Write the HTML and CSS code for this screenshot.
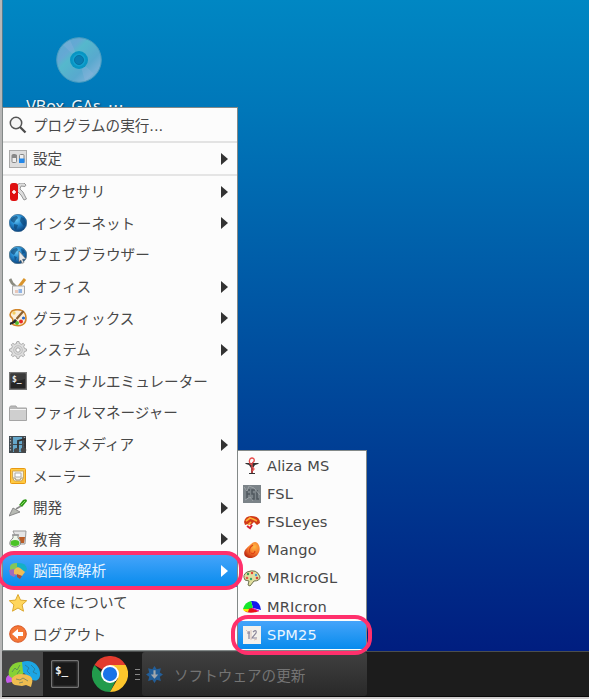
FILE: index.html
```html
<!DOCTYPE html>
<html lang="ja">
<head>
<meta charset="utf-8">
<title>Xfce</title>
<link rel="stylesheet" href="styles.css">
</head>
<body>
<div class="screen">
  <main class="desktop">
    <div class="disc-item">
      <svg class="disc" viewBox="0 0 46 46"><defs><linearGradient id="cd" x2="1" y2="1"><stop stop-color="#56adcf"/><stop offset=".28" stop-color="#65a8d4"/><stop offset=".38" stop-color="#55b8cc"/><stop offset=".65" stop-color="#58a9ce"/><stop offset=".8" stop-color="#74b0d6"/><stop offset="1" stop-color="#55aacd"/></linearGradient></defs><circle cx="23" cy="23" r="22.3" fill="url(#cd)" stroke="#4a9dc0"/><path d="M23 23 7 8l7-5zM23 23l6 21 9-7z" fill="#92b6dd" opacity=".3"/><circle cx="23" cy="23" r="9" fill="#0795c3"/><circle cx="23" cy="23" r="6.5" fill="#12a0cf"/><circle cx="23" cy="23" r="4.5" fill="#087db3" stroke="#0871a0"/></svg>
      <span class="disc-name">VBox_GAs_⋯</span>
    </div>
  </main>
  <footer class="taskbar">
    <div class="start"><svg viewBox="0 0 36 28"><path d="M4 15C1 16 0 20 2 23l5-1 3-5z" fill="#c45be9"/><path d="M4 16C2 7 9 1 18 2l2 10-6 5-7 1z" fill="#86d235"/><path d="M17 2c10-4 19 4 18 13-1 8-8 6-12 2l-5-5z" fill="#1ca6e5"/><path d="M7 18c4-5 12-5 18-2 4 3 2 7 1 11l-5-2-4 1-7-1c-3-1-4-4-3-7z" fill="#eebd50"/><path d="m7 12 3-4 2 2 3-5m-3 9 3-4m5-5 4 3-2 3 3 3m1-9 4 4-2 3 4 2M11 19l4 1 3-2 5 3m-9 2 4-1" fill="none" stroke="#37636a" stroke-opacity=".55"/></svg></div>
    <div class="launcher"><svg viewBox="0 0 28 28"><rect x=".7" y=".7" width="26.6" height="26.6" rx="1" fill="#171717" stroke="#747474" stroke-width="1.4"/><rect x="2" y="2" width="24" height="24" fill="#191919" stroke="#333"/><text x="4" y="14" class="term-large">$_</text></svg></div>
    <div class="launcher chrome"><svg viewBox="0 0 48 48"><path d="M24 24 3.2 12A24 24 0 0 1 44.800 12z" fill="#e33b2e"/><path d="M24 24h-10L3.200 12A24 24 0 0 0 24 48l9-18z" fill="#229b4c"/><path d="M24 12h20.800A24 24 0 0 1 24 48l10.400-18z" fill="#fcc52c"/><circle cx="24" cy="24" r="12" fill="#fff"/><circle cx="24" cy="24" r="9.500" fill="#1a73e8"/></svg></div>
    <div class="grip"><i></i><i></i><i></i></div>
    <div class="task"><svg viewBox="0 0 16 16"><path d="m8 0 2 3 4-1-1 4 3 2-3 2 1 4-4-1-2 3-2-3-4 1 1-4-3-2 3-2-1-4 4 1z" fill="#235e98"/><path d="M7 4h2v4h2.500l-3.500 4-3.500-4H7z" fill="#a2a8ad"/></svg><span>ソフトウェアの更新</span></div>
  </footer>

  <nav class="menu">
    <div class="item run"><svg viewBox="0 0 18 18"><circle cx="7" cy="7" r="5.700" fill="#f4f4f4" stroke="#555" stroke-width="1.500"/><path d="m11 11 5.500 5.500" stroke="#4b4b4b" stroke-width="2.300"/></svg><span>プログラムの実行...</span></div>
    <div class="item settings"><svg viewBox="0 0 18 18"><rect x=".5" y=".5" width="17" height="17" fill="#ddd" stroke="#aaa"/><rect x="3" y="4.500" width="4.500" height="8" rx="1" fill="#eee" stroke="#888"/><path d="M3 5h5v3H3z" fill="#888"/><rect x="10.500" y="4.500" width="4.500" height="8" rx="1" fill="#eee" stroke="#888"/><path d="M10 8.500h5.500v4.500H10z" fill="#2588e9"/></svg><span>設定</span><b></b></div>
    <div class="item"><svg viewBox="0 0 18 18"><path d="m8 2 3-2h4l2 2-1 1.500-4-.5-1 3 3 3 3.500 7-2.500 1-3-5-4-4z" fill="#ddd" stroke="#8d8d8d" stroke-width=".9"/><rect x="1" y="0" width="8" height="18" rx="3" fill="#df1010"/><path d="M5 7v4M3 9h4" stroke="#fff" stroke-width="1.500"/></svg><span>アクセサリ</span><b></b></div>
    <div class="item"><svg viewBox="0 0 18 18"><defs><radialGradient id="globe" cx=".4" cy=".3" r=".7"><stop stop-color="#6accf9"/><stop offset=".5" stop-color="#2386cc"/><stop offset="1" stop-color="#0b4480"/></radialGradient></defs><circle cx="9" cy="9" r="8.700" fill="url(#globe)" stroke="#2a5e86" stroke-width=".6"/><path d="M2 5q2-3 6-3L9 4 7 6 5 9 2 7zm3 5 4 1-2 5-2-2zm7-7 3 1 2 5-2 3-2-2-2-3z" fill="#0d4474" opacity=".65"/></svg><span>インターネット</span><b></b></div>
    <div class="item"><svg viewBox="0 0 18 18"><circle cx="9" cy="9" r="8.700" fill="url(#globe)" stroke="#4d7185" stroke-width=".8"/><path d="M2 5q2-3 6-3L9 4 7 6 5 9 2 7zm3 5 3 1-2 4zm7-7 3 1 1 3-3 1z" fill="#0d4474" opacity=".65"/><path d="m10 5 7 8-3.500.3 1.500 3.200-1.800.8-1.500-3.300L10 16z" fill="#e8e8e8" stroke="#666" stroke-width=".6"/></svg><span>ウェブブラウザー</span></div>
    <div class="item"><svg viewBox="0 0 18 18"><path d="m1 1 2 4 5 5" fill="none" stroke="#8b8b80" stroke-width="2.800"/><path d="m16 1-7 9" stroke="#d9942b" stroke-width="3"/><path d="M3.500 8h12v7q0 2-2 2h-8q-2 0-2-2z" fill="#f3f3f3" stroke="#aaa"/><path d="M6 12h3v3H6z" fill="#e8c7b9"/><path d="M9.500 11h3.500v4H9.500z" fill="#91b5e5"/></svg><span>オフィス</span><b></b></div>
    <div class="item"><svg viewBox="0 0 18 18"><path d="M3 2C9-1 17 1 17 9c0 7-6 9-12 7-4-1 1-4-2-7-3-2-2-5 0-7z" fill="#fbefdc" stroke="#d18529" stroke-width="1.600"/><circle cx="8" cy="14" r="2" fill="#54bd28"/><circle cx="12" cy="12.500" r="2" fill="#e92a24"/><circle cx="14.500" cy="9" r="1.600" fill="#2669cd"/><circle cx="5" cy="4" r="1.700" fill="#f3ce65"/><path d="m14.500 2-7 8" stroke="#8c6133" stroke-width="2.200"/><path d="m6 10 2 1.500-2 2.500-5 2q-1-3 2-3z" fill="#292929"/></svg><span>グラフィックス</span><b></b></div>
    <div class="item"><svg viewBox="0 0 18 18"><path d="m7.500 1 .5-.5h2l.5 2 2 .8 1.700-1 1.500 1.500-1 1.700.8 2 2 .5v2l-2 .5-.8 2 1 1.700-1.500 1.500-1.700-1-2 .8-.5 2H8l-.5-2-2-.8-1.700 1-1.500-1.500 1-1.700-.8-2-2-.5V8l2-.5.8-2-1-1.700 1.500-1.500 1.700 1 2-.8z" fill="#ddd" stroke="#a6a6a6" stroke-width=".9"/><circle cx="9" cy="9" r="4.300" fill="none" stroke="#c0c0c0"/><circle cx="9" cy="9" r="2.200" fill="#fff" stroke="#a6a6a6"/></svg><span>システム</span><b></b></div>
    <div class="item"><svg viewBox="0 0 18 18"><rect x=".7" y=".7" width="16.600" height="16.600" fill="#252525" stroke="#777" stroke-width="1.400"/><path d="M2 2h14v5L2 11z" fill="#3b3b3b"/><text x="3" y="10" class="term-small">$_</text></svg><span>ターミナルエミュレーター</span></div>
    <div class="item"><svg viewBox="0 0 18 18"><path d="M.5 16.500v-13l1-1.500H7l1 2h9.500v12.500z" fill="#b8b8b8" stroke="#a5a5a5"/><path d="M1 6h16v10H1z" fill="#cfcfcf"/><path d="M1 5.500h16" stroke="#f5f5f5"/></svg><span>ファイルマネージャー</span></div>
    <div class="item"><svg viewBox="0 0 18 18"><path d="M0 0h17v17H0z" fill="#414b52"/><path d="M4 1h9v7H4zm0 8h9v7H4z" fill="#65a7ca"/><path d="M1.500 1v15m14-15v15" stroke="#aaa" stroke-width="1.200" stroke-dasharray="1.500"/><path d="M9 14V5l7-2v11" fill="none" stroke="#303030" stroke-width="1.800"/><ellipse cx="7.500" cy="14.500" rx="2.700" ry="2.500" fill="#484848"/><ellipse cx="14.500" cy="14" rx="2.800" ry="2.500" fill="#484848"/></svg><span>マルチメディア</span><b></b></div>
    <div class="item"><svg viewBox="0 0 18 18"><rect x="1.500" y="1.500" width="15" height="15" rx="1" fill="#ffc941" stroke="#e89912"/><path d="M3.500 4h11v7l-2 3h-7l-2-3z" fill="#f4f1e7" stroke="#c89b46" stroke-width=".8"/><path d="M6 6h6v4H6z" fill="#fff" stroke="#aaa"/><path d="M4 11h2l1 2h4l1-2h2" fill="none" stroke="#a79776"/></svg><span>メーラー</span></div>
    <div class="item"><svg viewBox="0 0 18 18"><path d="m10 6 4-5q4-2 4 1l-5 6z" fill="#319819"/><path d="m12 6 4-4" stroke="#84df60"/><path d="m7 10 5-3" stroke="#888" stroke-width="1.500"/><path d="m0 17 4-8 7 4z" fill="#b7bab4" stroke="#777" stroke-width=".8"/></svg><span>開発</span><b></b></div>
    <div class="item"><svg viewBox="0 0 18 18"><path d="M4 1h13l-1 13h-6z" fill="#e5e5e5" stroke="#999"/><path d="M10 7h6l-1 6h-4z" fill="#bb5e28"/><path d="M4 5h5v3c5 5 2 9-3 9-6 0-7-5-2-9z" fill="#edf6e9" stroke="#888"/><ellipse cx="6" cy="13" rx="4.500" ry="3" fill="#4bc327"/><path d="M3 5h7" stroke="#999" stroke-width="1.500"/></svg><span>教育</span><b></b></div>
    <div class="item selected"><svg viewBox="0 0 18 18"><path d="M1 5q0-4 7-4l2 7-6 2-3-2z" fill="#83c65a"/><path d="M8 1q9-1 10 6 0 3-4 2L8 5z" fill="#14b0c6"/><path d="M0 8l5-1 4 4-4 4-4-2z" fill="#a46cb9"/><path d="M5 8q3-4 6-2l5 4-3 4-8-2z" fill="#f0bd55"/><path d="m8 12 5 2-2 3-3-2z" fill="#a74a40"/></svg><span>脳画像解析</span><b></b></div>
    <div class="item"><svg viewBox="0 0 18 18"><path d="m9 .5 2.500 5.600 6.200.6-4.600 4.200 1.400 6.300L9 14l-5.500 3.200 1.400-6.300L.3 6.700l6.200-.6z" fill="#ffd65d" stroke="#dba72e"/></svg><span>Xfce について</span></div>
    <div class="item"><svg viewBox="0 0 18 18"><circle cx="9" cy="9" r="8.300" fill="#f47636" stroke="#d85623"/><path d="m3 9 6-5v3h5v4H9v3z" fill="#fff"/></svg><span>ログアウト</span></div>
  </nav>

  <nav class="submenu">
    <div class="item"><svg viewBox="0 0 18 18"><path d="M2 6h14l-1 1-3 1-2 3v5h2v1H6v-1h2v-5L6 8 3 7z" fill="#333"/><path d="M9 16V6m0 8q4-2 0-4m0-2q-4-2-2-6 2-2 4 0 1 3-2 4" fill="none" stroke="#e74c4c" stroke-width="1.300"/></svg><span>Aliza MS</span></div>
    <div class="item"><svg viewBox="0 0 18 18"><path d="M0 0h18v18H0z" fill="#7b8388"/><path d="M4 14V5h3M4 9h3m5-4H9v4h2v5H8m6-9v9h2" fill="none" stroke="#50585e" stroke-width="1.500"/><path d="m1 2 3 4 2-5 5 2 6 7M2 15l5-3 3 4" fill="none" stroke="#9ba1a5"/></svg><span>FSL</span></div>
    <div class="item"><svg viewBox="0 0 18 18"><path d="M1 9Q2 3 8 3q9 0 9 7l-3 2-3-3-3 3-3-1-3 1z" fill="#d13a18"/><path d="m3 8 4-3 3 1 4 2m-9 4 3-3" fill="none" stroke="#ffae35" stroke-width="1.600"/><path d="m4 13 3 2 2-3" fill="none" stroke="#d82236" stroke-width="2"/></svg><span>FSLeyes</span></div>
    <div class="item"><svg viewBox="0 0 18 18"><defs><radialGradient id="mango" cx=".65" cy=".3" r=".75"><stop stop-color="#ffb942"/><stop offset=".55" stop-color="#f5742b"/><stop offset="1" stop-color="#be2912"/></radialGradient></defs><path d="M12 1c5 1 6 8 3 12-3 5-10 5-13 2C-1 10 5 6 8 3q2-2 4-2z" fill="url(#mango)"/><path d="M10 4q-5 3-3 8m1 0q3 2 4-2" fill="none" stroke="#dc4318" stroke-width="1.200"/></svg><span>Mango</span></div>
    <div class="item"><svg viewBox="0 0 18 18"><path d="M4 3q10-4 13 5 0 4-6 4l-4 5-2-1 1-4-4-1Q-1 6 4 3z" fill="#e2df9f" stroke="#6d704d"/><circle cx="5" cy="5" r="1.200" fill="#3a9a51"/><circle cx="9" cy="4" r="1.200" fill="#e64435"/><circle cx="13" cy="6" r="1.200" fill="#479ed8"/><circle cx="14" cy="9" r="1.300" fill="#d44737"/><circle cx="4" cy="9" r="1.300" fill="#e25b4a"/><circle cx="8" cy="10" r="1.200" fill="#37a36b"/></svg><span>MRIcroGL</span></div>
    <div class="item"><svg viewBox="0 0 18 18"><path d="M8 3q9-1 10 9l-8-2z" fill="#1419ed"/><path d="M8 3Q2 4 0 11l6 1 4-2z" fill="#16e72b"/><path d="m1 12 8-2 7 3q-7 3-13 1z" fill="#e9111b"/><path d="m0 11 6 0-1 3-4-1z" fill="#f5e700"/><path d="m9 10 7 3" stroke="#e411cc"/></svg><span>MRIcron</span></div>
    <div class="item selected"><svg viewBox="0 0 18 18"><path d="M0 0h18v18H0z" fill="#f4f1ec"/><path d="M6 5v8M4 7h3m3-1q4-3 3 1l-4 5h5" fill="none" stroke="#8a8499" stroke-width="1.200"/><path d="m3 4 2 2m6 8 3-1M8 4v10" stroke="#dcc3b9"/></svg><span>SPM25</span></div>
  </nav>
  <div class="mark mark-main"></div>
  <div class="mark mark-sub"></div>
</div>
</body>
</html>
```
FILE: styles.css
```css
* { box-sizing: border-box; }
body { margin: 0; font: 14.6px "DejaVu Sans", "Noto Sans CJK JP", sans-serif; }
.screen { position: relative; display: flex; flex-direction: column; width: 589px; height: 699px; padding-left: 2px; overflow: hidden; border-bottom: 2px solid #d0cdcd; background: linear-gradient(90deg, #b6b6b6 2px, #1c1c1c 2px); }
.desktop { height: 651px; border-left: 1px solid #527d91; background: linear-gradient(#0087c3 0, #0077b9 110px, #0061ab 240px, #003e94 450px, #001e80 650px); }
.disc-item { display: flex; flex-direction: column; align-items: center; gap: 12px; width: 152px; padding-top: 37px; }
.disc { width: 46px; height: 46px; }
.disc-name { padding-right: 8px; color: #edf6fa; font-family: "Noto Sans", "Noto Sans CJK JP", sans-serif; font-size: 16px; line-height: 23px; text-shadow: 1px 1px 2px #003454; white-space: nowrap; }
.menu, .submenu { position: absolute; background: #fcfcfc; border: 1px solid #838988; color: #484848; }
.menu { left: 2px; top: 107px; width: 236px; height: 544px; }
.submenu { left: 237px; top: 450px; width: 130px; height: 201px; padding-top: 1px; }
.item { display: flex; align-items: center; gap: 6px; height: 31.6px; padding: 0 9px 0 6px; white-space: nowrap; line-height: 20px; }
.item svg { flex: none; width: 18px; height: 18px; }
.menu .item span { padding-top: 1px; }
.submenu .item { height: 28.1px; padding-left: 5px; letter-spacing: 0.15px; }
.item.run { height: 35px; border-bottom: 2px solid #e3e3e3; }
.menu .item.run span { padding-top: 3px; }
.item.settings { height: 33px; border-bottom: 2px solid #e5e5e5; }
.item b { margin-left: auto; border-left: 7px solid #333; border-top: 6px solid transparent; border-bottom: 6px solid transparent; }
.item.selected { background: linear-gradient(#45a4fa, #078bed); color: #e8f5ff; }
.item.selected b { border-left-color: #fff; }
.mark { position: absolute; border: 4px solid #ff306c; border-radius: 17px; }
.mark-main { left: -3px; top: 551px; width: 246px; height: 39px; }
.mark-sub { left: 231px; top: 615px; width: 141px; height: 40px; }
.taskbar { display: flex; height: 46px; background: #1c1c1c; border-top: 1px solid #4b4e4e; border-bottom: 1px solid #080808; }
.start { display: flex; align-items: center; justify-content: center; width: 41px; background: #474747; }
.start svg { width: 36px; height: 28px; }
.launcher { display: flex; align-items: center; justify-content: center; width: 44px; }
.launcher svg { width: 28px; height: 28px; }
.chrome { width: 47px; padding-right: 1px; }
.chrome svg { width: 36px; height: 36px; }
.grip { display: flex; flex-direction: column; justify-content: center; gap: 4px; width: 8px; padding-left: 1px; }
.grip i { width: 5px; height: 1px; background: #888; }
.task { display: flex; align-items: center; gap: 11px; width: 225px; padding-left: 4px; border-radius: 3px; background: linear-gradient(#404040, #292929); color: #747474; }
.task svg { width: 17px; height: 17px; }
.term-large { font: bold 11px "DejaVu Sans Mono", monospace; fill: #eee; }
.term-small { font: bold 8px "DejaVu Sans Mono", monospace; fill: #eee; }
```
